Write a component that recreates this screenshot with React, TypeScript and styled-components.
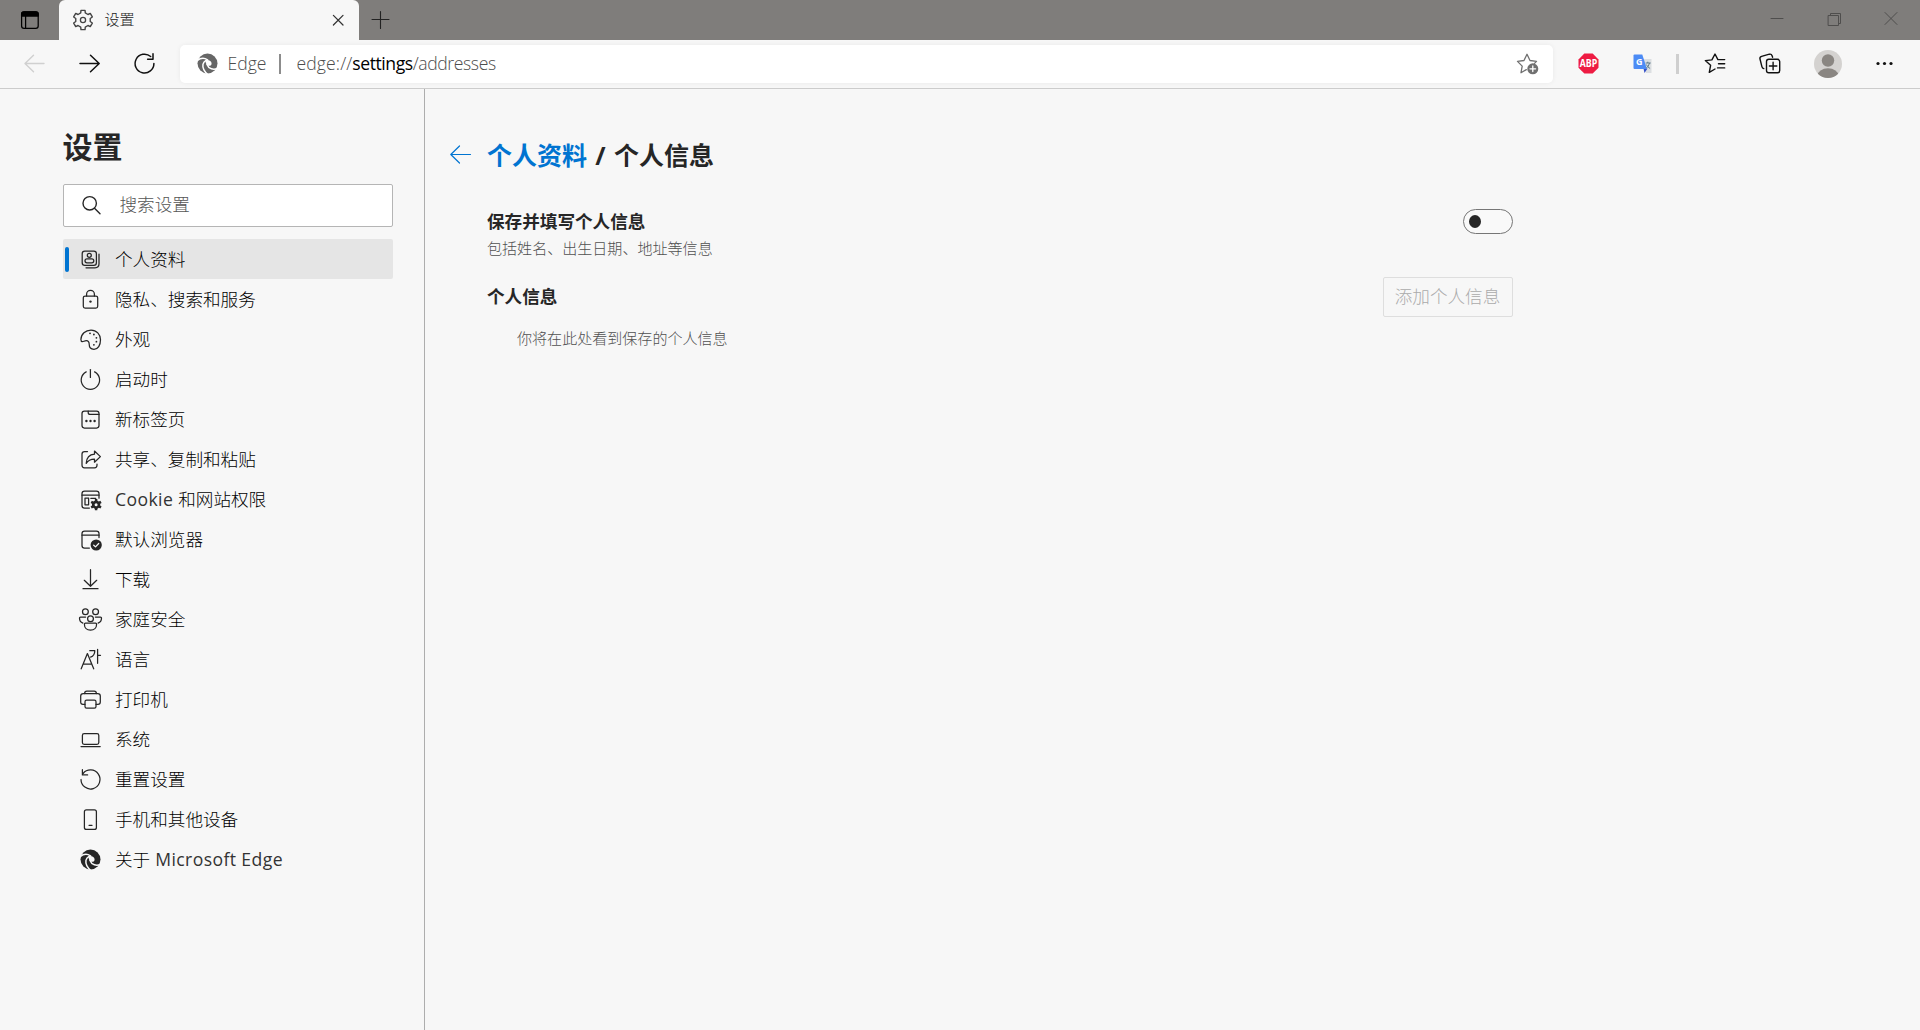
import React from "react";
import styled, { createGlobalStyle, css } from "styled-components";

const Global = createGlobalStyle`
  * { box-sizing: border-box; }
  html, body { margin: 0; padding: 0; }
  body {
    background: #f7f7f7;
    color: #262626;
    font-family: "Open Sans", "Noto Sans CJK SC", sans-serif;
    font-size: 17.6px;
    overflow: hidden;
  }
  button, input { font: inherit; color: inherit; }
`;

const Window = styled.div`
  display: flex;
  flex-direction: column;
  width: 100vw;
  height: 100vh;
  background: #f7f7f7;
`;

const TitleBar = styled.header`
  display: flex;
  height: 40px;
  flex: none;
  background: #7f7d7b;
`;

const PlainButton = styled.button`
  display: flex;
  align-items: center;
  justify-content: center;
  flex: none;
  padding: 0;
  border: 0;
  background: none;
`;

const TabActions = styled(PlainButton)`
  width: 59px;
  height: 40px;
`;

const Tab = styled.div`
  display: flex;
  align-items: center;
  width: 300px;
  height: 41px;
  padding: 0 12px 1px;
  background: #f7f7f7;
  border-radius: 6px 6px 0 0;
`;

const TabTitle = styled.span`
  flex: 1;
  margin-left: 9.5px;
  padding-bottom: 2px;
  font-size: 15px;
  font-weight: 300;
  line-height: 20px;
  color: #222;
`;

const NewTab = styled(PlainButton)`
  width: 44px;
  height: 40px;
`;

const WindowControls = styled.div`
  display: flex;
  margin-left: auto;
  padding-right: 1px;
`;

const WindowButton = styled(PlainButton)`
  width: 57px;
  height: 38px;
`;

const Toolbar = styled.div`
  display: flex;
  align-items: center;
  flex: none;
  height: 49px;
  padding: 0 0 1px 7px;
  border-bottom: 1px solid #cccccc;
`;

const NavButton = styled(PlainButton)`
  width: 55px;
  height: 40px;
`;

const AddressBar = styled.div`
  display: flex;
  align-items: center;
  width: 1373px;
  height: 38px;
  margin-left: 8px;
  padding: 0 12px 0 15px;
  background: #fff;
  border-radius: 5px;
  box-shadow: 0 0 5px rgba(0, 0, 0, 0.06);
`;

const SiteName = styled.span`
  margin-left: 7.5px;
  padding-bottom: 1px;
  font-weight: 300;
  line-height: 24px;
  color: #4d4d4d;
`;

const AddressDivider = styled.span`
  width: 2px;
  height: 20px;
  margin: 0 15.5px 0 12.5px;
  background: #8c8c8c;
`;

const Url = styled.span`
  flex: 1;
  padding-bottom: 1px;
  line-height: 24px;
  letter-spacing: -0.4px;
  color: #4d4d4d;
  font-weight: 300;
`;

const Scheme = styled.span`
  letter-spacing: 0.1px;
`;

const Host = styled.span`
  font-weight: 400;
  letter-spacing: -0.45px;
  color: #000;
`;

const Tools = styled.div`
  display: flex;
  align-items: center;
  flex: 1;
`;

const Tool = styled(PlainButton)<{ $w: number }>`
  width: ${(p) => p.$w}px;
  height: 38px;
`;

const ToolDivider = styled.span`
  width: 3px;
  height: 20px;
  margin: 0 8px 0 14px;
  background: #cfcfcf;
`;

const Body = styled.div`
  display: flex;
  flex: 1;
  min-height: 0;
`;

const Sidebar = styled.aside`
  width: 425px;
  flex: none;
  padding: 39px 31px 0 63px;
  border-right: 1px solid #adadad;
`;

const SidebarTitle = styled.h1`
  margin: 0 0 0 -0.5px;
  font-size: 30px;
  line-height: 38px;
  font-weight: 700;
`;

const SearchBox = styled.label`
  display: flex;
  align-items: center;
  height: 43px;
  margin: 18px 0 12px;
  padding-left: 15px;
  background: #fff;
  border: 1px solid #b5b5b5;
  border-radius: 2px;
`;

const SearchInput = styled.input`
  flex: 1;
  min-width: 0;
  margin-left: 15.5px;
  padding: 0 0 3px;
  border: 0;
  outline: 0;
  background: none;
  font-weight: 300;

  &::placeholder {
    color: #555;
    opacity: 1;
  }
`;

const Menu = styled.nav`
  display: flex;
  flex-direction: column;
`;

const MenuItem = styled.a<{ $active?: boolean }>`
  display: flex;
  align-items: center;
  height: 40px;
  padding-left: 2px;
  border-radius: 2px;
  font-weight: 300;
  line-height: 26px;
  color: #000;
  ${(p) =>
    p.$active &&
    css`
      background: #e5e5e5;
    `}
`;

const Marker = styled.span<{ $active?: boolean }>`
  width: 4px;
  height: 25px;
  margin-right: 9px;
  border-radius: 2px;
  background: ${(p) => (p.$active ? "#0074d1" : "transparent")};
`;

const MenuLabel = styled.span`
  margin-left: 12px;
  white-space: pre;
`;

const Latin = styled.span`
  font-weight: 400;
  letter-spacing: 0.4px;
  color: #333;
`;

const Main = styled.main`
  flex: 1;
  padding: 46px 407px 0 23px;
`;

const Breadcrumb = styled.div`
  display: flex;
  align-items: center;
  height: 38px;
`;

const Crumbs = styled.h2`
  margin: 0 0 0 14px;
  padding-top: 1px;
  font-size: 25px;
  line-height: 36px;
  font-weight: 700;
  word-spacing: 1.8px;

  a {
    color: #0074d1;
  }
`;

const Settings = styled.div`
  padding-left: 39px;
`;

const SettingRow = styled.section<{ $top: number }>`
  display: flex;
  justify-content: space-between;
  align-items: flex-start;
  margin-top: ${(p) => p.$top}px;
`;

const Heading = styled.h3<{ $top?: number }>`
  margin: ${(p) => p.$top ?? 0}px 0 0;
  font-size: 17.6px;
  line-height: 26px;
  font-weight: 700;
`;

const Note = styled.p<{ $indent?: boolean }>`
  margin: ${(p) => (p.$indent ? "18px 0 0 30px" : "3px 0 0")};
  font-size: 15.05px;
  line-height: 22px;
  font-weight: 300;
  color: #505050;
`;

const Switch = styled.button`
  display: flex;
  align-items: center;
  width: 50px;
  height: 25px;
  margin-top: 1px;
  padding: 0 5px;
  border: 1px solid #767676;
  border-radius: 13px;
  background: #f9f9f9;
`;

const Knob = styled.span`
  width: 12px;
  height: 13px;
  border-radius: 50%;
  background: #262626;
`;

const AddButton = styled.button`
  width: 130px;
  height: 40px;
  padding: 0 1px 3px 0;
  border: 1px solid #dedede;
  border-radius: 2px;
  background: transparent;
  color: #ababab;
  font-weight: 300;
  white-space: nowrap;
`;

type IconProps = {
  children: React.ReactNode;
  size?: number;
  color?: string;
  stroke?: number;
};

const Glyph = styled.svg`
  flex: none;
`;

const Icon = ({ children, size = 25, color = "#262626", stroke = 1.25 }: IconProps) => (
  <Glyph
    width={size}
    height={size}
    viewBox={`0 0 ${size} ${size}`}
    fill="none"
    color={color}
    stroke={color}
    strokeWidth={stroke}
    strokeLinecap="round"
    strokeLinejoin="round"
  >
    {children}
  </Glyph>
);

const Dot = ({ x, y, r = 0.9 }: { x: number; y: number; r?: number }) => (
  <circle cx={x} cy={y} r={r} fill="currentColor" stroke="none" />
);

const gearOutline = (cx: number, cy: number, outer: number, inner: number, teeth: number) => {
  const points: string[] = [];
  const step = (Math.PI * 2) / teeth;
  for (let i = 0; i < teeth; i++) {
    const a = i * step - Math.PI / 2;
    [
      [-0.3, inner],
      [-0.2, outer],
      [0.2, outer],
      [0.3, inner],
    ].forEach(([offset, r]) => {
      const t = a + offset * step;
      points.push(`${(cx + r * Math.cos(t)).toFixed(2)} ${(cy + r * Math.sin(t)).toFixed(2)}`);
    });
  }
  return `M${points.join("L")}Z`;
};

const EdgeLogo = ({ color, gap }: { color: string; gap: string }) => (
  <Icon color={color}>
    <circle cx="12.5" cy="12.5" r="10" fill={color} stroke="none" />
    <g stroke={gap} strokeWidth="1.5">
      <path d="M2.200 9.600C5.200 7.200 9.400 6.800 12.600 8.900" />
      <path d="M11 9.300C7.400 11.200 7.200 15.400 8.800 18.600C9.800 20.600 11 21.900 12.400 23" />
      <path d="M22.400 17.400C18.600 19.200 13.600 18 12 13.600" />
    </g>
    <path d="M10.200 9.200C13.200 8.200 16.600 9.600 16.600 12.400C16.600 13.600 16 14.400 15 14.800C13.400 15 12 14.400 11.400 13.200C10.800 12 10.600 11 10.200 9.200Z" fill={gap} stroke="none" />
  </Icon>
);

const icons = {
  profile: (
    <>
      <rect x="4.2" y="4.2" width="14.2" height="14.2" rx="2.6" />
      <circle cx="11.3" cy="8.3" r="2" />
      <rect x="7" y="11.8" width="8.8" height="4" rx="2" />
      <path d="M21 7.2v9.6q0 4-4 4H8" />
    </>
  ),
  lock: (
    <>
      <rect x="5.3" y="9" width="14.4" height="12" rx="1.8" />
      <path d="M8.6 9V7.2a3.9 3.9 0 0 1 7.8 0V9" />
      <Dot x={12.5} y={14.6} r={1.2} />
    </>
  ),
  palette: (
    <>
      <path d="M2.9 12.6C3 7 7.5 3 13 3s9.500 4.300 9.500 9.800-2.500 9.500-6.500 9.500c-3.200 0-4.800-2.300-4.800-5 0-2.200-1-3.600-2.900-3.600-1.800 0-2.700 1-4 1-.9 0-1.400-.8-1.400-2.100Z" />
      <Dot x={12} y={6.3} />
      <Dot x={15.9} y={7.5} />
      <Dot x={18.4} y={10.8} />
      <Dot x={18.4} y={14.7} />
      <Dot x={15.9} y={17.8} />
    </>
  ),
  power: (
    <>
      <path d="M8.200 4.900a9.200 9.200 0 1 0 8.400 0" />
      <path d="M12.400 2.600v7.800" />
    </>
  ),
  newtab: (
    <>
      <rect x="4" y="4" width="17" height="17" rx="2.4" />
      <path d="M10.200 4v1.400q0 2 2 2H21" />
      <Dot x={8.4} y={14} r={1.2} />
      <Dot x={12.5} y={14} r={1.2} />
      <Dot x={16.6} y={14} r={1.2} />
    </>
  ),
  share: (
    <>
      <path d="M9.500 4.600h-3Q4 4.600 4 7.100v11.200q0 2.500 2.500 2.500h10q2.500 0 2.500-2.500v-1.200" />
      <path d="M16.500 4l5.900 5.600-5.900 5.600V12c-4 0-6.600 1.400-8.300 4.400C8.500 11 11.500 7.600 16.500 7.200Z" />
    </>
  ),
  cookie: (
    <>
      <path d="M11.400 21H6.600Q4 21 4 18.400V6.600Q4 4 6.600 4h11.800Q21 4 21 6.600v4.600" />
      <path d="M4 8.200h17M12.800 11.300h5" />
      <rect x="7" y="11" width="3.6" height="6.8" />
      <path d={gearOutline(18.1, 17.7, 5.8, 4.2, 6)} fill="currentColor" stroke="none" />
      <circle cx="18.1" cy="17.7" r="1.5" fill="#f7f7f7" stroke="none" />
    </>
  ),
  browser: (
    <>
      <path d="M11.400 21H6.600Q4 21 4 18.400V6.600Q4 4 6.600 4h11.800Q21 4 21 6.600v4" />
      <path d="M4 8.200h17" />
      <Dot x={18.2} y={18} r={5.6} />
      <path d="M15.700 18.200l1.800 1.700 3.200-3.400" stroke="#f7f7f7" />
    </>
  ),
  download: <path d="M12.500 2.700v16.600M6.300 13.300l6.200 6 6.200-6M5 21.700h15" />,
  family: (
    <>
      <circle cx="7.4" cy="4.8" r="2.9" />
      <circle cx="17.6" cy="4.8" r="2.9" />
      <circle cx="12.5" cy="11.7" r="2.9" />
      <path d="M7.400 16.200h10.200q1 0 1 1c0 3.600-2.500 5.900-6.100 5.900s-6.100-2.300-6.100-5.900q0-1 1-1Z" />
      <path d="M7.600 10H2.500q-1 0-1 1c0 2.600 1.300 4.400 3.400 5.100M17.400 10h5.100q1 0 1 1c0 2.600-1.300 4.400-3.400 5.100" />
    </>
  ),
  language: (
    <>
      <path d="M3.200 21.800L9.400 6.600l6.300 15.200M5.300 17h8.200" />
      <path d="M11.800 3.700h5c0 3-1.600 5.400-4.200 6.400M19.600 2.300v14M19.600 8.300h2.900" />
    </>
  ),
  printer: (
    <>
      <path d="M6.600 6.500Q6.600 4 8.800 4h7.400q2.200 0 2.200 2.500" />
      <path d="M7 17.300H5q-2.300 0-2.300-2.300V9Q2.700 6.500 5.200 6.500h14.600q2.500 0 2.500 2.500v6q0 2.300-2.300 2.300h-2" />
      <rect x="7" y="13.2" width="11" height="8" rx="1.6" />
    </>
  ),
  laptop: (
    <>
      <rect x="4.4" y="6.7" width="16.4" height="10.6" rx="1.8" />
      <path d="M3 19.600h19.200" />
    </>
  ),
  reset: (
    <>
      <path d="M3 12.500a9.500 9.500 0 1 0 2.100-6" />
      <path d="M4.400 2.700v5.200h5.200" />
    </>
  ),
  phone: (
    <>
      <rect x="6.4" y="2.8" width="12" height="19.6" rx="2" />
      <path d="M11 18.300h3" />
    </>
  ),
};

const entries: {
  icon: keyof typeof icons | "edge";
  label: React.ReactNode;
  active?: boolean;
}[] = [
  { icon: "profile", label: "个人资料", active: true },
  { icon: "lock", label: "隐私、搜索和服务" },
  { icon: "palette", label: "外观" },
  { icon: "power", label: "启动时" },
  { icon: "newtab", label: "新标签页" },
  { icon: "share", label: "共享、复制和粘贴" },
  { icon: "cookie", label: <><Latin>Cookie </Latin>和网站权限</> },
  { icon: "browser", label: "默认浏览器" },
  { icon: "download", label: "下载" },
  { icon: "family", label: "家庭安全" },
  { icon: "language", label: "语言" },
  { icon: "printer", label: "打印机" },
  { icon: "laptop", label: "系统" },
  { icon: "reset", label: "重置设置" },
  { icon: "phone", label: "手机和其他设备" },
  { icon: "edge", label: <>关于<Latin> Microsoft Edge</Latin></> },
];

const TabStrip = () => (
  <TitleBar>
    <TabActions aria-label="标签操作">
      <Icon size={20} color="#000">
        <rect x="1.6" y="1.8" width="16.6" height="16.6" rx="2.4" />
        <path d="M1.600 6V4q0-2.200 2.400-2.200h11.800q2.400 0 2.400 2.200v2Z" fill="#000" />
        <path d="M5.600 6v12" />
      </Icon>
    </TabActions>
    <Tab>
      <Icon size={24} color="#444" stroke={1.3}>
        <path d={gearOutline(12, 12, 9.8, 7.4, 6)} strokeWidth="1.4" />
        <circle cx="12" cy="12" r="2.6" />
      </Icon>
      <TabTitle>设置</TabTitle>
      <Icon size={18} color="#333">
        <path d="M4.400 4.400l9.600 9.600M14 4.400l-9.600 9.600" />
      </Icon>
    </Tab>
    <NewTab aria-label="新建标签页">
      <Icon size={20} color="#222" stroke={1.1}>
        <path d="M9.500 1.500v17M1 9.500h17" />
      </Icon>
    </NewTab>
    <WindowControls>
      <WindowButton aria-label="最小化">
        <Icon size={16} color="#4f4e4d" stroke={1}>
          <path d="M2 7.500h12" />
        </Icon>
      </WindowButton>
      <WindowButton aria-label="还原">
        <Icon size={16} color="#4f4e4d" stroke={1}>
          <path d="M2.500 4.500h10v10h-10ZM4.500 4.500v-2h10v10h-2" />
        </Icon>
      </WindowButton>
      <WindowButton aria-label="关闭">
        <Icon size={16} color="#4f4e4d" stroke={1}>
          <path d="M2 1.500l12 12M14 1.500l-12 12" />
        </Icon>
      </WindowButton>
    </WindowControls>
  </TitleBar>
);

const ToolbarRow = () => (
  <Toolbar>
    <NavButton aria-label="后退">
      <Icon color="#d0d0d0" stroke={1.4}>
        <path d="M22 12.500H3.200M11.500 4.200L3 12.500l8.500 8.300" />
      </Icon>
    </NavButton>
    <NavButton aria-label="前进">
      <Icon color="#111" stroke={1.5}>
        <path d="M3 12.500h19M13.500 4.200l8.700 8.300-8.700 8.300" />
      </Icon>
    </NavButton>
    <NavButton aria-label="刷新">
      <Icon color="#111" stroke={1.5}>
        <path d="M21.900 12.500a9.400 9.400 0 1 1-3.200-7" />
        <path d="M21 2.800v5.400h-5.400" />
      </Icon>
    </NavButton>
    <AddressBar>
      <EdgeLogo color="#666" gap="#fff" />
      <SiteName>Edge</SiteName>
      <AddressDivider />
      <Url>
        <Scheme>edge://</Scheme>
        <Host>settings</Host>/addresses
      </Url>
      <Icon color="#707070" stroke={1.3}>
        <path d="M10.300 18.600L5 21.700l1.200-6.600-4.700-4.700 6.500-.9L11 3.300l3 6.200 6.500.9-2 2" />
        <circle cx="16.800" cy="17.800" r="5.500" fill="#707070" stroke="none" />
        <path d="M16.800 15v5.600M14 17.800h5.600" stroke="#fff" />
      </Icon>
    </AddressBar>
    <Tools>
      <Tool $w={70} aria-label="ABP">
        <svg width="21" height="21" viewBox="0 0 21 21" overflow="visible">
          <path d="M6.300.5h8.400l5.800 5.900v8.300l-5.800 5.800H6.300L.5 14.700V6.400Z" fill="#ee1c43" />
          <text x="10.500" y="14.300" fontSize="10.500" fontWeight="700" fill="#fff" textAnchor="middle" textLength="17.500" lengthAdjust="spacingAndGlyphs" fontFamily="Open Sans, sans-serif">ABP</text>
        </svg>
      </Tool>
      <Tool $w={39} aria-label="Google 翻译">
        <svg width="20" height="20" viewBox="0 0 20 20">
          <path d="M8 5h10.500v14H13Z" fill="#dcdfe2" />
          <path d="M10.500 14.500h4l-3 4.500Z" fill="#3550c8" />
          <path d="M1.500.5h7.800l4.600 14.500H1.500q-1 0-1-1V1.500q0-1 1-1Z" fill="#4c8bf5" />
          <text x="6.300" y="11" fontSize="9" fontWeight="700" fill="#fff" textAnchor="middle" fontFamily="Open Sans, sans-serif">G</text>
          <path d="M12.700 9h5M14.800 7.700V9M16.500 9q-.7 3.500-3.300 5.200M13.300 10.500q1.200 2.500 3.800 4" stroke="#607d8b" fill="none" />
        </svg>
      </Tool>
      <ToolDivider />
      <Tool $w={56} aria-label="收藏夹">
        <Icon color="#111" stroke={1.4}>
          <path d="M12 18l-5.700 3.300 1.300-7-5.300-4.700 6.600-.7L12 3l2.900 5.600h6.800M15.500 12.700h6.200M14.500 16.900h7.200" />
        </Icon>
      </Tool>
      <Tool $w={55} aria-label="集锦">
        <Icon color="#111" stroke={1.4}>
          <rect x="8.500" y="8.300" width="13.200" height="13.400" rx="2.300" />
          <path d="M15.100 11.300v7.400M11.400 15h7.400" />
          <path d="M5.800 17.600q-1.500-.3-1.900-2L2 8q-.5-2 1.600-2.600l7.800-2.200q2-.5 2.700 1.600l.5 1.500" />
        </Icon>
      </Tool>
      <Tool $w={60} aria-label="个人资料">
        <svg width="28" height="28" viewBox="0 0 28 28">
          <defs>
            <clipPath id="avatar">
              <circle cx="14" cy="14" r="14" />
            </clipPath>
          </defs>
          <circle cx="14" cy="14" r="14" fill="#d4d2d0" />
          <g clipPath="url(#avatar)" fill="#8a8682">
            <circle cx="14" cy="10.500" r="6.200" />
            <ellipse cx="14" cy="25.500" rx="10.500" ry="7.200" />
          </g>
        </svg>
      </Tool>
      <Tool $w={53} aria-label="设置及其他">
        <Icon color="#111">
          <Dot x={6} y={12.5} r={1.6} />
          <Dot x={12.5} y={12.5} r={1.6} />
          <Dot x={19} y={12.5} r={1.6} />
        </Icon>
      </Tool>
    </Tools>
  </Toolbar>
);

export default function App() {
  return (
    <Window>
      <Global />
      <TabStrip />
      <ToolbarRow />
      <Body>
        <Sidebar>
          <SidebarTitle>设置</SidebarTitle>
          <SearchBox>
            <Icon stroke={1.4}>
              <circle cx="10.700" cy="10.300" r="6.700" />
              <path d="M15.500 15.300l5.500 5.500" />
            </Icon>
            <SearchInput placeholder="搜索设置" />
          </SearchBox>
          <Menu>
            {entries.map((entry) => (
              <MenuItem key={entry.icon} $active={entry.active}>
                <Marker $active={entry.active} />
                {entry.icon === "edge" ? (
                  <EdgeLogo color="#262626" gap="#f7f7f7" />
                ) : (
                  <Icon>{icons[entry.icon]}</Icon>
                )}
                <MenuLabel>{entry.label}</MenuLabel>
              </MenuItem>
            ))}
          </Menu>
        </Sidebar>
        <Main>
          <Breadcrumb>
            <Icon color="#0074d1" stroke={1.2}>
              <path d="M22.500 12.500H2.800M11.500 4L2.800 12.500l8.700 8.500" />
            </Icon>
            <Crumbs>
              <a>个人资料</a> / 个人信息
            </Crumbs>
          </Breadcrumb>
          <Settings>
            <SettingRow $top={35}>
              <div>
                <Heading>保存并填写个人信息</Heading>
                <Note>包括姓名、出生日期、地址等信息</Note>
              </div>
              <Switch role="switch" aria-checked={false} aria-label="保存并填写个人信息">
                <Knob />
              </Switch>
            </SettingRow>
            <SettingRow $top={18}>
              <div>
                <Heading $top={6}>个人信息</Heading>
                <Note $indent>你将在此处看到保存的个人信息</Note>
              </div>
              <AddButton disabled>添加个人信息</AddButton>
            </SettingRow>
          </Settings>
        </Main>
      </Body>
    </Window>
  );
}
